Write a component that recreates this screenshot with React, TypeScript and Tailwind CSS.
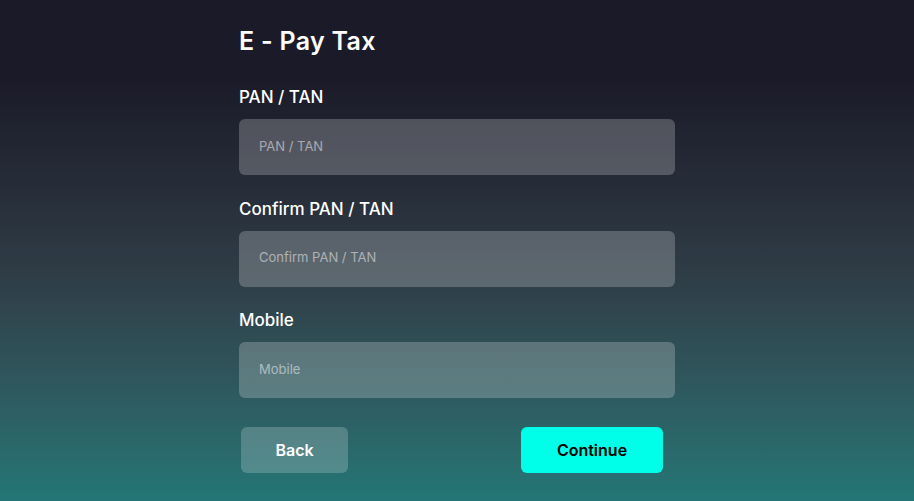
export default function App() {
    const fields = [
        { label: 'PAN / TAN', placeholder: 'PAN / TAN' },
        { label: 'Confirm PAN / TAN', placeholder: 'Confirm PAN / TAN' },
        { label: 'Mobile', placeholder: 'Mobile' },
    ];

    return (
        <div
            className="min-h-screen h-[501px] bg-gradient-to-b from-[#1b1a28] from-15% via-[#2f3d47] via-55% to-[#237676] text-white"
            style={{ fontFamily: 'Inter, "Open Sans", sans-serif' }}
        >
            <div className="w-[436px] mx-auto pt-[25px] flex flex-col">
                <h1 className="text-[25px] leading-8 font-semibold tracking-[0.3px]">E - Pay Tax</h1>

                {fields.map((f, i) => (
                    <div key={f.label} className={i === 0 ? 'mt-[26px]' : 'mt-[19.5px]'}>
                        <label className="block text-[17px] leading-7 font-medium">{f.label}</label>
                        <input
                            type="text"
                            placeholder={f.placeholder}
                            className="mt-[8px] w-full h-14 rounded-md bg-white/[0.22] px-5 pb-[3px] text-[13px] text-white placeholder:text-white/50 outline-none"
                        />
                    </div>
                ))}

                <div className="mt-[29px] flex justify-between pl-[2px] pr-3">
                    <button className="w-[107px] h-[46px] rounded-md bg-white/20 text-base font-semibold text-white">
                        Back
                    </button>
                    <button className="w-[142px] h-[46px] rounded-md bg-[#00ffe8] text-base font-semibold text-black">
                        Continue
                    </button>
                </div>
            </div>
        </div>
    );
}
